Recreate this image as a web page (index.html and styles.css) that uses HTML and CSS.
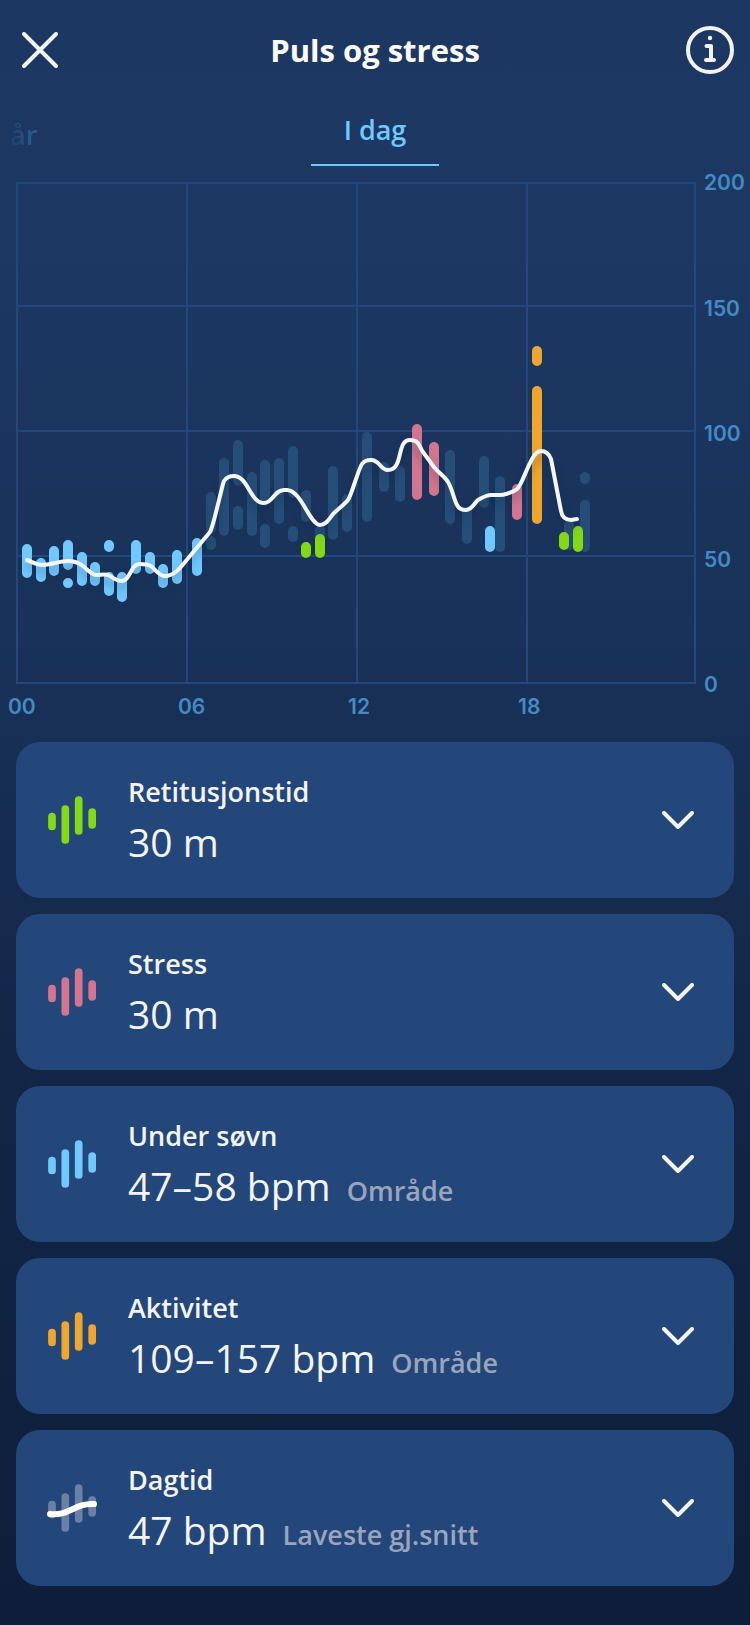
FILE: index.html
```html
<!DOCTYPE html>
<html lang="nb">
<head>
<meta charset="utf-8">
<meta name="viewport" content="width=device-width, initial-scale=1">
<title>Puls og stress</title>
<link rel="stylesheet" href="styles.css">
</head>
<body>
<svg class="sprite" aria-hidden="true">
  <symbol id="bars" viewBox="0 0 48 48">
    <path d="M4 20.5V30.5M17.3 13V44M30.7 4V35M44.2 16V29" fill="none" stroke="currentColor" stroke-width="7.7" stroke-linecap="round"/>
  </symbol>
  <symbol id="chevron" viewBox="0 0 32 18">
    <path d="M2 2L16 16L30 2" fill="none" stroke="currentColor" stroke-width="4" stroke-linecap="round" stroke-linejoin="round"/>
  </symbol>
</svg>

<header class="header">
  <button class="icon-button" type="button" aria-label="Lukk">
    <svg class="close-icon" viewBox="0 0 36 36"><path d="M2 2L34 34M34 2L2 34"/></svg>
  </button>
  <h1 class="title">Puls og stress</h1>
  <button class="icon-button" type="button" aria-label="Informasjon">
    <svg class="info-icon" viewBox="0 0 48 48"><circle cx="24" cy="24" r="22"/><path d="M20.5 20H25V34M20 34H28"/><circle class="info-dot" cx="24" cy="12" r="2.2"/></svg>
  </button>
</header>

<nav class="tabs">
  <button class="tab tab-previous" type="button">år</button>
  <button class="tab tab-active" type="button" aria-current="true">I dag</button>
</nav>

<main>
  <section class="chart" aria-label="Puls gjennom dagen">
    <svg class="plot" viewBox="16 182 680 502">
      <path class="grid" d="M17 183H695M17 306H695M17 431H695M17 556H695M17 683H695M17 182V684M187 183V683M357 183V683M527 183V683M695 182V684"/>
      <path class="bar daytime" d="M211 497V528M211 541V545M224 463V531M238 445V481M238 511V525M252 477V531M265 465V500M265 529V543M279 463V519M293 451V493M293 531V537M306 495V517M320 530V545M333 471V535M347 499V527M367 437V517M384 467V487M400 471V497M450 455V519M467 512V539M484 461V503M500 481V547M569 525V545M585 477V479M585 505V547"/>
      <path class="bar sleep" d="M27 549V573M41 563V577M54 551V571M68 545V565M68 583V583.1M82 557V581M95 567V581M109 545V547M109 577V591M122 577V597M136 545V569M150 557V569M163 569V583M177 555V579M197 543V571M490 531V547"/>
      <path class="bar stress" d="M417 429V495M434 447V491M517 489V515"/>
      <path class="bar activity" d="M537 351V361M537 391V519"/>
      <path class="bar recovery" d="M306 547V553M320 539V553M564 537V545M578 531V547"/>
      <path class="average" d="M27 560C33 562 36 565 42 565C50 565 60 561 68 561C74 561 79 563 83 566C87 569 91 575 97 575C101 575 104 574 108 575C113 577 116 581 121 581C131 581 130 564 140 564C144 564 147 564 151 566C156 570 159 576 165 576C174 576 180 568 185 562L210 532C214 525 222 485 224 481C226 478 230 476 234 476C248 476 250 503 264 503C273 503 274 490 284 490H287C301 490 310 525 320 525C327 525 330 517 334 513C338 509 345 504 348 500C352 494 358 470 362 464C364 461 368 460 371 460C380 460 380 470 388 470C404 470 396 440 410 440C420 440 419 447 423 452L434 467C438 472 446 478 448 482C452 488 454 500 457 505C459 509 462 510 466 510C472 510 475 502 478 500C482 498 486 495 491 495H500C504 495 512 492 516 490C523 487 530 451 541 451C546 451 549 454 551 459L561 511C562 517 565 520 571 520L577 519"/>
    </svg>
    <div class="y-axis"><span>200</span><span>150</span><span>100</span><span>50</span><span>0</span></div>
    <div class="x-axis"><span>00</span><span>06</span><span>12</span><span>18</span></div>
  </section>

  <section class="cards">
    <button class="card" type="button" aria-expanded="false">
      <svg class="card-icon recovery" viewBox="0 0 48 48"><use href="#bars"/></svg>
      <span class="card-text"><span class="card-title">Retitusjonstid</span><span class="card-row"><span class="card-value">30 m</span></span></span>
      <svg class="chevron"><use href="#chevron"/></svg>
    </button>
    <button class="card" type="button" aria-expanded="false">
      <svg class="card-icon stress" viewBox="0 0 48 48"><use href="#bars"/></svg>
      <span class="card-text"><span class="card-title">Stress</span><span class="card-row"><span class="card-value">30 m</span></span></span>
      <svg class="chevron"><use href="#chevron"/></svg>
    </button>
    <button class="card" type="button" aria-expanded="false">
      <svg class="card-icon sleep" viewBox="0 0 48 48"><use href="#bars"/></svg>
      <span class="card-text"><span class="card-title">Under søvn</span><span class="card-row"><span class="card-value">47–58 bpm</span><span class="card-note">Område</span></span></span>
      <svg class="chevron"><use href="#chevron"/></svg>
    </button>
    <button class="card" type="button" aria-expanded="false">
      <svg class="card-icon activity" viewBox="0 0 48 48"><use href="#bars"/></svg>
      <span class="card-text"><span class="card-title">Aktivitet</span><span class="card-row"><span class="card-value">109–157 bpm</span><span class="card-note">Område</span></span></span>
      <svg class="chevron"><use href="#chevron"/></svg>
    </button>
    <button class="card" type="button" aria-expanded="false">
      <svg class="card-icon muted" viewBox="0 0 48 48"><use href="#bars"/><path class="trend" d="M2 30C22 32 26 19 46 20"/></svg>
      <span class="card-text"><span class="card-title">Dagtid</span><span class="card-row"><span class="card-value">47 bpm</span><span class="card-note">Laveste gj.snitt</span></span></span>
      <svg class="chevron"><use href="#chevron"/></svg>
    </button>
  </section>
</main>
</body>
</html>
```

FILE: styles.css
```css
* {
  box-sizing: border-box;
}

body {
  margin: 0;
  min-height: 100vh;
  background: linear-gradient(#1c3862 0, #1c3863 240px, #183056 720px, #132749 1000px, #10213f 1400px, #0e1d3a 1625px);
  color: #f3f4f7;
  font-family: "Open Sans", "Noto Sans", sans-serif;
}

button {
  margin: 0;
  padding: 0;
  border: 0;
  background: none;
  color: inherit;
  font: inherit;
}

.sprite {
  display: none;
}

.header {
  display: flex;
  align-items: center;
  justify-content: space-between;
  height: 100px;
  padding: 0 16px;
}

.title {
  margin: 0;
  color: #fff;
  font-size: 31px;
  line-height: 40px;
  font-weight: 700;
}

.icon-button {
  display: grid;
  place-items: center;
  width: 48px;
  height: 48px;
}

.close-icon,
.info-icon {
  fill: none;
  stroke: #f3f3f5;
  stroke-width: 4;
  stroke-linecap: round;
  stroke-linejoin: round;
}

.close-icon {
  width: 36px;
  height: 36px;
}

.info-icon {
  width: 48px;
  height: 48px;
}

.info-dot {
  fill: #f3f3f5;
  stroke: none;
}

.tabs {
  display: grid;
  grid-template-columns: 1fr 128px 1fr;
  height: 66px;
}

.tab {
  font-size: 27px;
  line-height: 36px;
  font-weight: 600;
}

.tab-previous {
  justify-self: start;
  padding: 4px 0 0 10px;
  background: linear-gradient(90deg, #1c3862 4px, #2f6597 40px);
  background-clip: text;
  color: transparent;
}

.tab-active {
  padding-bottom: 4px;
  border-bottom: 2px solid #70c8ff;
  color: #70c8ff;
}

.chart {
  display: grid;
  grid-template-columns: 1fr 46px;
  column-gap: 8px;
  padding: 16px 0 0 16px;
  color: #438bc4;
  font-family: Inter, sans-serif;
  font-size: 21px;
  line-height: 24px;
  font-weight: 600;
}

.plot {
  display: block;
  width: 100%;
  height: auto;
}

.grid,
.bar,
.average {
  fill: none;
}

.grid {
  stroke: #24477d;
  stroke-width: 2;
}

.bar {
  stroke: currentColor;
  stroke-width: 10;
  stroke-linecap: round;
}

.average {
  stroke: #f5f6f8;
  stroke-width: 4;
  stroke-linecap: round;
  stroke-linejoin: round;
  filter: drop-shadow(0 6px 4px rgba(10, 30, 60, 0.3));
}

.daytime {
  color: #254e78;
}

.sleep {
  color: #70c8ff;
}

.stress {
  color: #d3758f;
}

.activity {
  color: #efa62f;
}

.recovery {
  color: #83d916;
}

.muted {
  color: #6a80a6;
}

.y-axis {
  display: flex;
  flex-direction: column;
  justify-content: space-between;
  margin: -11px 0 -13px;
}

.x-axis {
  display: grid;
  grid-template-columns: repeat(4, 1fr);
  margin: 11px 8px 0 -8px;
}

.cards {
  display: grid;
  gap: 16px;
  padding: 23px 16px 36px;
}

.card {
  display: flex;
  align-items: center;
  width: 100%;
  padding: 28px 40px 28px 32px;
  border-radius: 24px;
  background: #23477a;
  text-align: left;
}

.card-icon {
  width: 48px;
  height: 48px;
  overflow: visible;
}

.trend {
  fill: none;
  stroke: #fff;
  stroke-width: 6;
  stroke-linecap: round;
}

.card-text {
  flex: 1;
  margin-left: 32px;
}

.card-title {
  display: block;
  font-size: 27px;
  line-height: 44px;
  font-weight: 600;
}

.card-row {
  display: flex;
  align-items: baseline;
  gap: 16px;
}

.card-value {
  font-size: 39px;
  line-height: 56px;
}

.card-note {
  color: #9aa5bd;
  font-size: 27px;
  line-height: 36px;
  font-weight: 600;
}

.chevron {
  width: 32px;
  height: 18px;
  color: #f3f3f5;
}
```
